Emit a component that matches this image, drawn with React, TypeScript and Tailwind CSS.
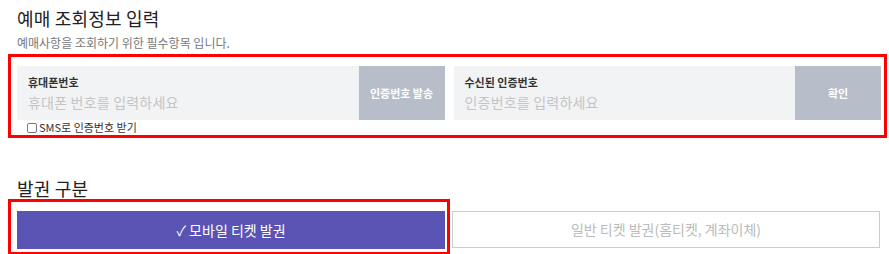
import React from 'react'

const font = { fontFamily: '"Noto Sans CJK KR", "Noto Sans", sans-serif' }

const Field = ({ label, placeholder, action }: { label: string, placeholder: string, action: string }) => (
    <div className="flex h-[54px] bg-[#f2f3f5]">
        <div className="flex-1 flex flex-col justify-center pl-[11px]">
            <div className="text-[11px] leading-[14px] font-bold text-[#333]">{label}</div>
            <input
                className="mt-[4px] bg-transparent outline-none text-[14px] leading-[18px] tracking-[0.2px] text-[#333] placeholder:text-[#c5c5c5]"
                placeholder={placeholder}
                style={font}
            />
        </div>
        <button className="w-[86px] bg-[#b8bdca] text-white text-[11px] font-bold" style={font}>
            {action}
        </button>
    </div>
)

export default function App() {
    return (
        <div className="w-[889px] h-[254px] bg-white overflow-hidden" style={font}>
            <div className="pl-[17px] pt-[6px]">
                <h2 className="text-[18px] leading-[24px] text-[#222] tracking-[0.2px]">예매 조회정보 입력</h2>
                <p className="mt-[5px] text-[12px] leading-[16px] text-[#777]">예매사항을 조회하기 위한 필수항목 입니다.</p>
            </div>

            <div className="mt-[3px] ml-[8px] mr-[2px] h-[84px] border-[3px] border-[#ff0000] pt-[9px] pl-[6px] pr-[3px]">
                <div className="grid grid-cols-2 gap-[9px]">
                    <div>
                        <Field label="휴대폰번호" placeholder="휴대폰 번호를 입력하세요" action="인증번호 발송" />
                        <label className="flex items-center gap-[2px] pl-[10px] h-[15px] text-[11px] leading-[15px] text-[#333]">
                            <span className="w-[10px] h-[10px] border border-[#777] rounded-[2px] bg-white" />
                            <span>SMS로 인증번호 받기</span>
                        </label>
                    </div>
                    <Field label="수신된 인증번호" placeholder="인증번호를 입력하세요" action="확인" />
                </div>
            </div>

            <h2 className="mt-[40px] pl-[17px] text-[18px] leading-[20px] text-[#222] tracking-[0.2px]">발권 구분</h2>

            <div className="mt-[1px] flex">
                <div className="ml-[8px] w-[442px] h-[56px] border-[3px] border-[#ff0000] pt-[9px] pl-[6px] pr-[2px]">
                    <button className="w-full h-[38px] bg-[#5953b3] text-white text-[14px]" style={font}>
                        ✓ 모바일 티켓 발권
                    </button>
                </div>
                <div className="ml-[2px] w-[428px] pt-[12px]">
                    <button className="w-full h-[37px] border border-[#cccccc] bg-white text-[#bbbbbb] text-[14px]" style={font}>
                        일반 티켓 발권(홈티켓, 계좌이체)
                    </button>
                </div>
            </div>
        </div>
    )
}
